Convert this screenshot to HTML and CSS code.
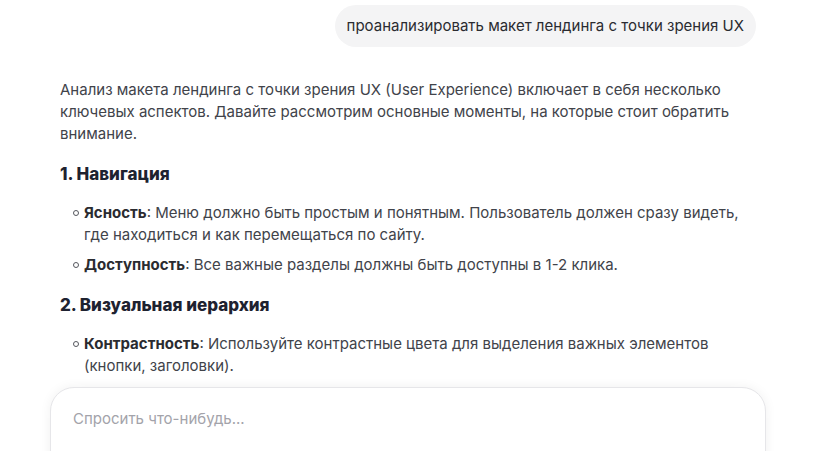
FILE: index.html
```html
<!DOCTYPE html>
<html lang="ru">
<head>
<meta charset="utf-8">
<link rel="stylesheet" href="styles.css">
</head>
<body>
<div class="chat">
  <div class="thread">
    <div class="user-row">
      <div class="bubble">проанализировать макет лендинга с точки зрения UX</div>
    </div>
    <div class="answer">
      <p>Анализ макета лендинга с точки зрения UX (User Experience) включает в себя несколько ключевых аспектов. Давайте рассмотрим основные моменты, на которые стоит обратить внимание.</p>
      <h3>1. Навигация</h3>
      <ul>
        <li><strong>Ясность</strong>: Меню должно быть простым и понятным. Пользователь должен сразу видеть, где находиться и как перемещаться по сайту.</li>
        <li><strong>Доступность</strong>: Все важные разделы должны быть доступны в 1-2 клика.</li>
      </ul>
      <h3>2. Визуальная иерархия</h3>
      <ul>
        <li><strong>Контрастность</strong>: Используйте контрастные цвета для выделения важных элементов (кнопки, заголовки).</li>
      </ul>
    </div>
  </div>
  <div class="composer">
    <div class="input">Спросить что-нибудь...</div>
  </div>
</div>
</body>
</html>
```
FILE: styles.css
```css
html, body {
  margin: 0;
  padding: 0;
  background: #ffffff;
  height: 100%;
  overflow: hidden;
}
body {
  font-family: Inter, "Noto Sans", sans-serif;
  font-size: 15px;
  color: #41434a;
}
.chat {
  width: 716px;
  margin-left: 50px;
  position: relative;
  height: 451px;
}
.thread {
  padding: 5px 10px 0 10px;
}
.user-row {
  display: flex;
  justify-content: flex-end;
}
.bubble {
  background: #f4f4f5;
  color: #2a2b30;
  border-radius: 22px;
  padding: 10px 12px;
  line-height: 22px;
  font-size: 15px;
}
.answer {
  margin-top: 32px;
}
.answer p {
  margin: 0;
  line-height: 22px;
}
.answer h3 {
  margin: 17px 0 0 0;
  font-size: 17px;
  line-height: 24px;
  font-weight: 800;
  color: #1e2230;
}
.answer ul {
  margin: 16px 0 0 0;
  padding-left: 24px;
  list-style: none;
}
.answer li {
  position: relative;
  line-height: 22px;
  margin-bottom: 8px;
}
.answer li::before {
  content: "";
  position: absolute;
  left: -11px;
  top: 8px;
  width: 4px;
  height: 4px;
  border: 1px solid #55575e;
  border-radius: 50%;
}
.answer li:last-child {
  margin-bottom: 0;
}
.answer strong {
  font-weight: 700;
  color: #2a2b30;
}
.composer {
  position: absolute;
  left: 0;
  right: 0;
  top: 387px;
}
.input {
  background: #ffffff;
  border: 1px solid #e6e6e9;
  border-radius: 24px;
  height: 100px;
  box-shadow: 0 0 12px rgba(0, 0, 0, 0.06);
  padding: 20px 22px;
  color: #a3a3aa;
  line-height: 22px;
}
```
